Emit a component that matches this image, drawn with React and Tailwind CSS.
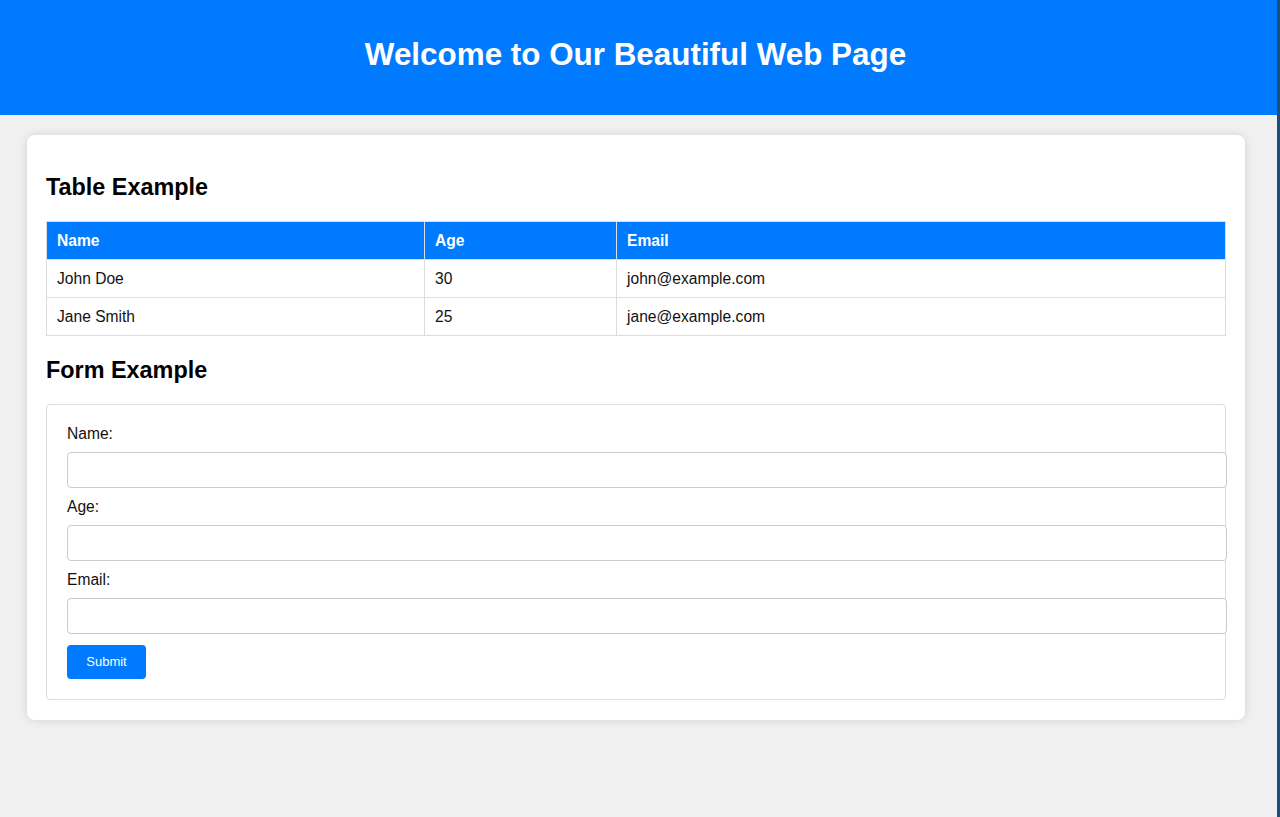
export default function App() {
  const rows = [
    ["John Doe", "30", "john@example.com"],
    ["Jane Smith", "25", "jane@example.com"],
  ];
  const font = { fontFamily: '"Liberation Sans", Arial, sans-serif' };
  return (
    <div className="flex min-h-[817px] w-[1280px] bg-[#f0f0f0]" style={font}>
      <div className="flex-1 flex flex-col">
        <header className="h-[115px] bg-[#007bff] flex justify-center pt-[37px] pr-[6px]">
          <h1 className="text-[31.4px] leading-[36px] font-bold text-white">
            Welcome to Our Beautiful Web Page
          </h1>
        </header>
        <div className="mt-[20px] ml-[27px] w-[1218px] bg-white rounded-[8px] shadow-[0_0_10px_rgba(0,0,0,0.12)] px-[19px] pt-[20px] pb-[20px]">
          <h2 className="mt-[18px] mb-[20px] text-[23.4px] leading-[28px] font-bold text-black">
            Table Example
          </h2>
          <table className="w-full border-collapse text-[15.6px] text-[#111]">
            <thead>
              <tr className="h-[38px] bg-[#007bff] text-white">
                <th className="w-[378px] border border-[#ddd] px-[10px] text-left font-bold">Name</th>
                <th className="w-[192px] border border-[#ddd] px-[10px] text-left font-bold">Age</th>
                <th className="border border-[#ddd] px-[10px] text-left font-bold">Email</th>
              </tr>
            </thead>
            <tbody>
              {rows.map((r) => (
                <tr key={r[0]} className="h-[38px]">
                  {r.map((c, i) => (
                    <td key={i} className="border border-[#ddd] px-[10px]">{c}</td>
                  ))}
                </tr>
              ))}
            </tbody>
          </table>
          <h2 className="mt-[20px] mb-[20px] text-[23.4px] leading-[28px] font-bold text-black">
            Form Example
          </h2>
          <form className="border border-[#ddd] rounded-[4px] p-[20px] pb-[20px]">
            {["Name:", "Age:", "Email:"].map((l) => (
              <div key={l}>
                <label className="block text-[15.6px] leading-[18px] mb-[9px] text-[#111]">{l}</label>
                <input
                  type="text"
                  className="block w-[calc(100%+22px)] h-[36px] border border-[#ccc] rounded-[4px] mb-[10px] px-[10px] bg-white"
                />
              </div>
            ))}
            <button
              type="button"
              className="w-[79px] h-[34px] bg-[#007bff] text-white text-[13px] rounded-[4px] mt-[1px]"
            >
              Submit
            </button>
          </form>
        </div>
      </div>
      <div className="w-[3px] bg-[#1b4f80]" />
    </div>
  );
}
